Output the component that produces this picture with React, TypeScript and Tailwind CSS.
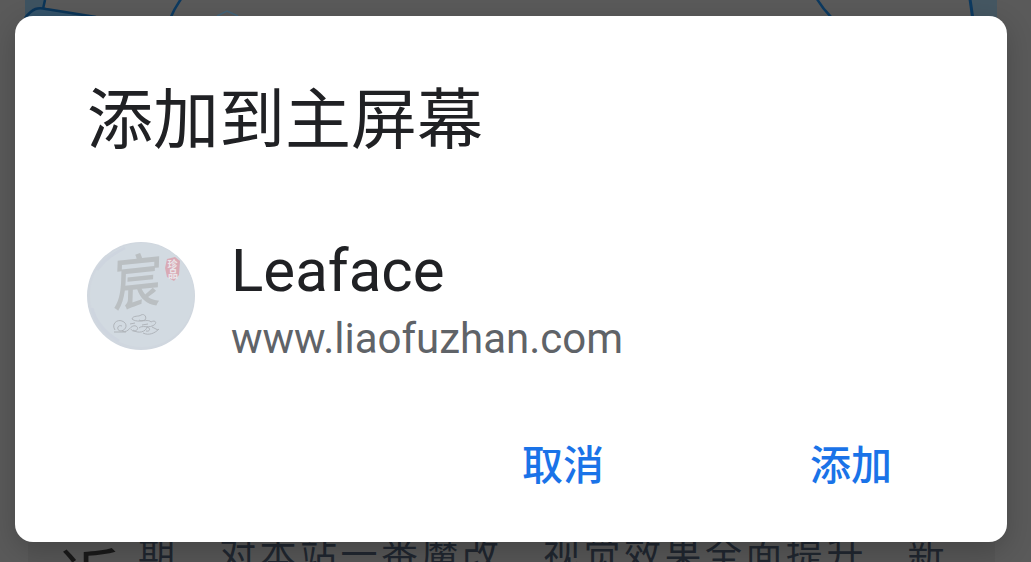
function Backdrop() {
  return (
    <div className="absolute inset-0 flex flex-col justify-between overflow-hidden bg-[#5a5a5a]">
      <svg className="h-10 w-full shrink-0" viewBox="0 0 1031 40" fill="none">
        <rect x="25" width="19" height="30" fill="#3e5361" />
        <path d="M25 18C34 6 38 7 46 9L96 17V40H25Z" fill="#34536a" />
        <path d="M45 0L43 9M25 18C33 8 38 7 46 9L96 17" stroke="#0b3558" strokeWidth="2.5" />
        <path d="M181 -1Q174 9 170 19M817 -1Q823 9 831 17" stroke="#0d3a60" strokeWidth="2.5" />
        <path d="M217 16L227 11L238 16" stroke="#43647a" strokeWidth="1.5" />
        <rect x="972" width="25" height="34" fill="#455762" />
        <path d="M970 -1L973 20" stroke="#0d3a60" strokeWidth="3" />
      </svg>
      <div className="ml-7 mr-[36px] flex h-7 items-start whitespace-nowrap bg-[#565656] font-['Noto_Sans_CJK_SC',sans-serif]">
        <span className="mt-[8px] ml-[30px] w-[80px] text-[62px] leading-[64px] text-[#191919]">近</span>
        <span className="-mt-[4px] text-[37px] font-normal leading-[44px] tracking-[3.5px] text-[#20262f]">
          期<span className="relative top-[5px]">，</span>对本站一番魔改<span className="relative top-[5px]">，</span>视觉效果全面提升<span className="relative top-[5px]">，</span>新
        </span>
      </div>
    </div>
  );
}

function SiteIcon() {
  return (
    <svg className="size-[108px] shrink-0" viewBox="0 0 108 108" fill="none">
      <circle cx="54" cy="54" r="54" fill="#d0d7df" />
      <circle cx="55" cy="53" r="52" fill="#d2dae1" />
      <path d="M10 28Q20 14 38 6M5 66Q10 86 32 99" stroke="#ced5df" strokeWidth="3" />
      <g transform="translate(26 64) rotate(-6) skewX(-8) scale(0.94 1.15)">
        <text className="font-['Noto_Sans_CJK_SC',sans-serif] text-[51px] font-medium" fill="#babfc2">
          宸
        </text>
      </g>
      <path d="M80 17L88 15L93 19L92 33L87 39L80 35L78 26Z" fill="#d9aab5" />
      <text className="font-['Noto_Sans_CJK_SC',sans-serif] text-[10px] font-bold" fill="#e9e5e9">
        <tspan x="80.5" y="25.5">珍</tspan>
        <tspan x="81" y="36">品</tspan>
      </text>
      <g stroke="#abb0b5" strokeWidth="0.9">
        <path d="M28 88C24 82 30 77 35 79C41 81 40 88 34 89C29 89 30 82 35 84M35 89C42 92 43 82 49 84C54 87 46 92 44 87" />
        <path d="M45 77C46 73 52 75 54 73C58 71 60 76 58 78C53 80 47 79 45 77M52 78C55 80 62 77 64 80C69 77 71 82 65 84C61 86 55 83 52 86" />
        <path d="M46 88C51 92 59 90 60 85C64 86 63 90 59 89M56 91C62 94 68 91 72 87M65 85L71 88M27 90H39M48 81L43 82M61 82L55 83" />
      </g>
    </svg>
  );
}

export default function App() {
  return (
    <main className="relative h-[562px] w-[1031px] overflow-hidden pl-[15px] pt-4">
      <Backdrop />
      <section
        role="dialog"
        aria-labelledby="dialog-title"
        className="relative flex h-[526px] w-[992px] flex-col rounded-[18px] bg-white px-[72px] font-['Roboto','Noto_Sans_CJK_SC',sans-serif] text-[#202124] shadow-[0_8px_28px_rgba(0,0,0,0.2)]"
      >
        <h1 id="dialog-title" className="mt-[50px] h-24 font-['Noto_Sans_CJK_SC',sans-serif] text-[66px] leading-[96px]">
          添加到主屏幕
        </h1>
        <div className="mt-[73px] flex h-[130px] items-start">
          <div className="mt-[7px]"><SiteIcon /></div>
          <div className="ml-9 mt-px">
            <div className="text-[60px] leading-[70px]">Leaface</div>
            <div className="mt-[8px] text-[42px] leading-[50px] text-[#5f6368]">www.liaofuzhan.com</div>
          </div>
        </div>
        <div className="mr-[43px] mt-[65px] flex justify-end gap-[206px] font-['Noto_Sans_CJK_SC',sans-serif] text-[41px] font-medium leading-[64px] text-[#1a73e8]">
          <button>取消</button>
          <button>添加</button>
        </div>
      </section>
    </main>
  );
}
